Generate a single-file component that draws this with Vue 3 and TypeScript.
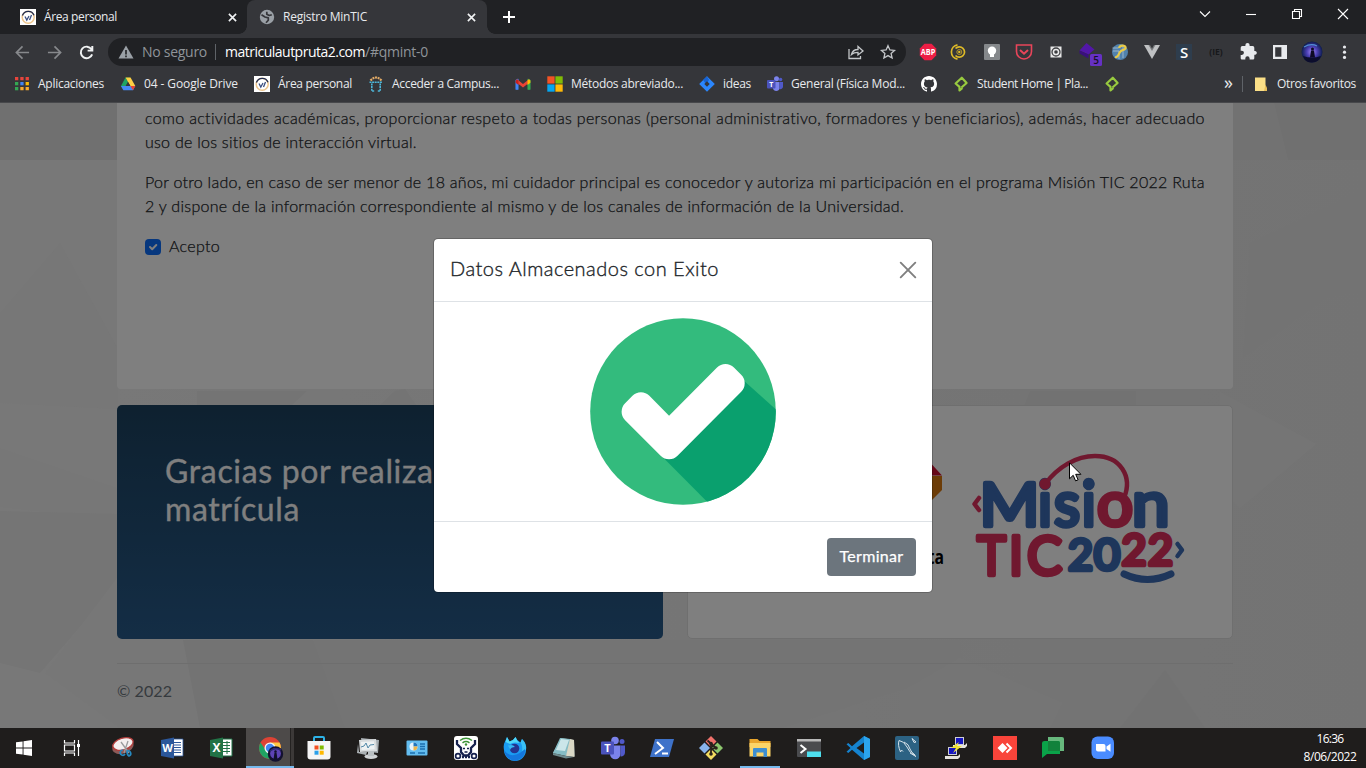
<script setup lang="ts">
interface Bookmark { icon: string; label?: string; w?: number }
interface Glyph { ch: string; x: number; y: number; size: number; w: number; color: string }

// Spreads the letters of a label so that it takes the given width.
const vFit = {
  mounted(el: HTMLElement, binding: { value: number }) {
    const natural = el.getBoundingClientRect().width
    const count = (el.textContent ?? '').trim().length
    el.style.letterSpacing = `${(binding.value - natural) / count}px`
  },
}

const ui = 'font-family="Open Sans, sans-serif"'

const small: Record<string, string> = {
  campus: '<rect width="16" height="16" fill="#fff"/><circle cx="8.200" cy="8.300" r="6" fill="none" stroke="#edc58c" stroke-width="1.500"/><path d="M2.400 6.500A6.200 6.200 0 0 1 14 6.200" fill="none" stroke="#1e2b50" stroke-width="1.300"/><path d="M5 7.500l1.800 3.500L9 7M9.500 11l2-5" fill="none" stroke="#3b4f80" stroke-width="1.300"/>',
  globe: '<circle cx="8" cy="8" r="7.200" fill="#9aa0a6"/><path d="M2.500 5.800 6 8l3.300.8v2.400L7 13.800M7.800 2.800v2.500l2.400 1.200 2.600-.8" fill="none" stroke="#35363a" stroke-width="1.700" stroke-linejoin="round"/>',
  apps: '<g><path d="M1 1h3.300v3.300H1zM6.300 1h3.300v3.300H6.300zM11.600 1h3.300v3.300h-3.300z" fill="#e8453c"/><path d="M1 6h3.300v3.300H1z" fill="#34a853"/><path d="M6.300 6h3.300v3.300H6.300z" fill="#4285f4"/><path d="M11.600 6h3.300v3.300h-3.300z" fill="#fbbc04"/><path d="M1 11h3.300v3.300H1z" fill="#34a853"/><path d="M6.300 11h3.300v3.300H6.300zM11.600 11h3.300v3.300h-3.300z" fill="#f9ab2e"/></g>',
  drive: '<path d="M5.500 1.500h5L8 6z" fill="#188038"/><path d="M5.500 1.500 8 6l-4.600 8.300L1 10z" fill="#1fa463"/><path d="M10.500 1.500 15.300 10h-4.900L5.500 1.500z" fill="#ffcf44"/><path d="M1 10h14.300L13 14.300H3.400z" fill="#4688f4"/><path d="M10.400 10h4.900L13 14.300z" fill="#ea4335"/><path d="M5.700 10 8 6l2.400 4z" fill="#35363a"/>',
  moodle: '<path d="M2.500 4.500q5.500-6 11 0" fill="none" stroke="#e4ac67" stroke-width="2.200" stroke-dasharray="2 .7"/><path d="M1.500 6.200h13M3.800 7.500V15h3M12.200 7.500V15h-3" fill="none" stroke="#4db7d9" stroke-width="1.600" stroke-dasharray="2 .6"/>',
  gmail: '<path d="M.8 13.500V4l2.400-1v10.500z" fill="#4285f4" stroke="#4285f4" stroke-width=".6"/><path d="M12.800 13.500V3l2.400 1v9.500z" fill="#34a853" stroke="#34a853" stroke-width=".6"/><path d="M2 3.200 8 8l6-4.800v3.600L8 11.600 2 6.800z" fill="#ea4335"/><path d="M12.500 4.500 14 3.200l1.400 1.200v2.400l-2.900 2.200z" fill="#fbbc04"/><path d="M.6 4.400 2 3.200l1.500 1.200V9L.6 6.800z" fill="#c5221f"/>',
  ms: '<path d="M.3.300h7.300v7.300H.3z" fill="#f35325"/><path d="M8.400.300h7.300v7.300H8.400z" fill="#81bc06"/><path d="M.3 8.400h7.300v7.300H.3z" fill="#05a6f0"/><path d="M8.400 8.400h7.300v7.300H8.400z" fill="#ffba08"/>',
  jira: '<path d="M8 .2 15.800 8 8 15.800.2 8z" fill="#2b86fc"/><path d="M8 .2 10 4 7 8 4 4z" fill="#1763d3"/><path d="m8 5.300 2.700 2.700L8 10.700 5.300 8z" fill="#35363a"/>',
  teams: `<circle cx="9.500" cy="2.700" r="2.500" fill="#7b83eb"/><circle cx="13.600" cy="3.500" r="1.700" fill="#5059c9"/><path d="M6 6h6.500v6.300a3.300 3.300 0 0 1-6.500 0z" fill="#7b83eb"/><path d="M12.500 6H16v5a2.600 2.600 0 0 1-3.500 2z" fill="#5059c9"/><rect y="4" width="8.500" height="8.500" rx="1" fill="#4b53bc"/><text x="4.200" y="10.800" text-anchor="middle" font-size="7" font-weight="700" fill="#fff" ${ui}>T</text>`,
  github: '<path fill="#fff" d="M8 0C3.580 0 0 3.580 0 8c0 3.540 2.290 6.530 5.470 7.590.4.070.55-.17.55-.38 0-.19-.01-.82-.01-1.490-2.010.37-2.530-.49-2.690-.94-.09-.23-.48-.94-.82-1.130-.28-.15-.68-.52-.01-.53.63-.01 1.080.58 1.230.82.72 1.210 1.870.87 2.330.66.070-.52.28-.87.51-1.070-1.780-.2-3.640-.89-3.640-3.950 0-.87.31-1.590.82-2.150-.08-.2-.36-1.020.08-2.120 0 0 .67-.21 2.200.82.64-.18 1.320-.27 2-.27s1.360.09 2 .27c1.530-1.040 2.200-.82 2.200-.82.44 1.100.16 1.920.08 2.120.51.56.82 1.270.82 2.150 0 3.070-1.870 3.750-3.650 3.950.29.25.54.73.54 1.480 0 1.070-.01 1.930-.01 2.200 0 .21.15.46.55.38A8.010 8.010 0 0 0 16 8c0-4.420-3.580-8-8-8"/>',
  platzi: '<path d="M8.500 11.500 13.600 7 8.800 1.700 2.600 7.500 6.500 10.800V14.500L9.500 12" fill="none" stroke="#98ca3f" stroke-width="2.200" stroke-linejoin="round"/>',
  folder: '<path d="M2 1.500h10.500V15H2z" fill="#fbdf87"/><path d="M12.500 8.500 14 12v3h-3z" fill="#e8bf5a"/>',
}

const ext: string[] = [
  `<path d="M6.500 1.800h7l4.700 4.700v7l-4.700 4.700h-7l-4.700-4.700v-7z" fill="#ed1e45"/><text x="10" y="13" text-anchor="middle" font-size="8" font-weight="700" fill="#fff" textLength="14.500" lengthAdjust="spacingAndGlyphs" ${ui}>ABP</text>`,
  '<path d="M8.500 2.800a7.300 7.300 0 0 0 0 14.400M6.500 6.500a5.200 5.200 0 1 1 0 7" fill="none" stroke="#ddb928" stroke-width="1.700" transform="translate(-1 0)"/><circle cx="9.300" cy="10" r="2.500" fill="none" stroke="#b3972b"/><circle cx="9.300" cy="10" r="1.200" fill="#ddb928"/>',
  '<rect x="2" y="2" width="16" height="16" rx="1" fill="#85888b"/><circle cx="10" cy="8.800" r="4.200" fill="#fff"/><path d="M8 12h4v3H8z" fill="#fff"/>',
  '<path d="M2.500 3h15v6.500a7.500 7.500 0 0 1-15 0z" fill="none" stroke="#e8455a" stroke-width="1.600"/><path d="m6 8 4 3.700L14 8" fill="none" stroke="#e8455a" stroke-width="2"/>',
  '<rect x="4.500" y="4.500" width="11" height="11" fill="#e9e9e9"/><circle cx="10" cy="10" r="4" fill="none" stroke="#3c3d40" stroke-width="1.300"/><circle cx="10" cy="10" r="1.800" fill="#3c3d40"/>',
  `<path d="m8.500 1 8 6.500-6 5-9-4z" fill="#5217a8"/><path d="m1.500 8.500 9 4v4l-9-5z" fill="#39107c"/><rect x="12" y="12" width="12" height="12" rx="1.500" fill="#6631c4"/><text x="18" y="21.700" text-anchor="middle" font-size="10" font-weight="600" fill="#161022" ${ui}>5</text>`,
  '<circle cx="10" cy="10" r="8" fill="#5282ad"/><path d="M3 9h6v8M2.500 6h6M13 3v13" stroke="#9ab6cc" fill="none"/><path d="M5 15c4 1 3-4 6-6s5-1 4.500-3.500S10 3 9 6" fill="none" stroke="#e8ca48" stroke-width="2.200"/>',
  '<path d="M2 3h16l-8 14z" fill="#bfc1c3"/><path d="M6.500 3h7L10 9z" fill="#77797c"/><path d="M8 3h4l-2 3.500z" fill="#35363a"/>',
  `<rect x="2" y="2" width="16" height="16" fill="#2e3d4d"/><text x="10" y="15.500" text-anchor="middle" font-size="15" font-weight="600" fill="#fff" ${ui}>S</text>`,
  `<text x="10" y="13" text-anchor="middle" font-size="8.500" font-weight="700" fill="#17181a" ${ui}>(IE)</text>`,
  '<path d="M17 9.500h-1V6.300a1.600 1.600 0 0 0-1.600-1.600H11.300v-1a2.100 2.100 0 0 0-4.200 0v1H4A1.600 1.600 0 0 0 2.400 6.300v3h1.100a2.100 2.100 0 0 1 0 4.300H2.400v3c0 .9.700 1.600 1.600 1.600h3v-1.100a2.100 2.100 0 0 1 4.300 0v1.100h3.100c.9 0 1.600-.7 1.600-1.600v-3.200h1a2 2 0 0 0 0-3.900z" fill="#e8eaed" transform="translate(.3 -.6)"/>',
  '<path fill-rule="evenodd" d="M3 3h14v14H3zM5.200 5.200v9.600h6.200V5.200z" fill="#e8eaed"/>',
  '<defs><radialGradient id="night"><stop offset="0" stop-color="#a78bf5"/><stop offset=".5" stop-color="#4b3fb5"/><stop offset="1" stop-color="#0d1c4c"/></radialGradient></defs><circle cx="10" cy="10" r="10.500" fill="url(#night)"/><path d="M2 5q7-4 13-1" stroke="#5aa6ea" fill="none" stroke-width="1.200" opacity=".8"/><path d="M1 14q9 3 18 0-2 6-9 6.500T1 14z" fill="#0c0d2c"/><circle cx="10.500" cy="7" r="1.500" fill="#0d0a24"/><path d="M9 8.500h3l1 7H8z" fill="#0d0a24"/>',
  '<g fill="#e8eaed"><circle cx="10.500" cy="5" r="1.600"/><circle cx="10.500" cy="10.200" r="1.600"/><circle cx="10.500" cy="15.400" r="1.600"/></g>',
]

const bookmarks: Bookmark[] = [
  { icon: 'apps', label: 'Aplicaciones', w: 66 },
  { icon: 'drive', label: '04 - Google Drive', w: 94 },
  { icon: 'campus', label: 'Área personal', w: 74 },
  { icon: 'moodle', label: 'Acceder a Campus...', w: 107 },
  { icon: 'gmail' },
  { icon: 'ms', label: 'Métodos abreviado...', w: 112 },
  { icon: 'jira', label: 'ideas', w: 28 },
  { icon: 'teams', label: 'General (Física Mod...', w: 114 },
  { icon: 'github' },
  { icon: 'platzi', label: 'Student Home | Pla...', w: 111 },
  { icon: 'platzi' },
]

const pinned: { name: string; art: string }[] = [
  { name: 'start', art: '<path fill="#fff" d="M4 6.300 10.600 5.400v6.100H4zM11.500 5.200 20 4v7.500h-8.500zM4 12.400h6.600v6.200L4 17.700zM11.500 12.400H20V20l-8.500-1.200z"/>' },
  { name: 'taskview', art: '<path d="M4.500 4v3h10V4M4.500 20v-3h10v3M4.500 9h10v6h-10zM18.500 4v16" fill="none" stroke="#fff" stroke-width="1.200"/><path d="M17 8h3v3h-3z" fill="#fff"/>' },
  { name: 'snip', art: '<ellipse cx="12" cy="11" rx="11" ry="6.500" transform="rotate(-17 12 11)" fill="#8c5a58"/><ellipse cx="12" cy="8" rx="10.500" ry="5.800" transform="rotate(-17 12 8)" fill="#f3eeee" stroke="#b33e3c" stroke-width="1.400"/><path d="m10 6 8 11M17 5l-4 12" stroke="#9a9a9c" stroke-width="1.300"/><path d="M12 14a2.600 2.600 0 1 0 2 4M16 15a2.500 2.500 0 1 1 2 5q-2-1-2-5z" fill="none" stroke="#2689c0" stroke-width="1.700"/>' },
  { name: 'word', art: `<path d="M12 3h11v17H12z" fill="#fff" stroke="#2b579a" stroke-width=".8"/><path d="M14 6.500h7M14 9h7M14 11.500h7M14 14h7M14 16.500h7" stroke="#2b579a"/><path d="M1 4 14 1.500v21L1 20z" fill="#2b579a"/><text x="7.500" y="16" text-anchor="middle" font-size="11" font-weight="700" fill="#fff" ${ui}>W</text>` },
  { name: 'excel', art: `<path d="M12 3h11v17H12z" fill="#fff" stroke="#217346" stroke-width="1"/><path d="M14 6.500h7M14 9.500h7M14 12.500h7M14 15.500h7M18 5v13" stroke="#217346"/><path d="M1 4 14 1.500v21L1 20z" fill="#217346"/><text x="7.500" y="16.300" text-anchor="middle" font-size="12" font-weight="700" fill="#fff" ${ui}>X</text>` },
  { name: 'chrome', art: '<circle cx="12" cy="12" r="11" fill="#dd4335"/><path d="M2.500 6.500A11 11 0 0 0 12 23l4.500-8.500H8z" fill="#1fa463"/><path d="M21.500 6.500H12l4.800 8L12 23A11 11 0 0 0 21.500 6.500z" fill="#fdc843"/><circle cx="12" cy="12" r="5.500" fill="#f4f4f4"/><circle cx="12" cy="12" r="4.200" fill="#4285f4"/><circle cx="17.500" cy="18" r="7.700" fill="#131130"/><circle cx="17.500" cy="17.500" r="5.400" fill="#5c43b5"/><circle cx="17.500" cy="15.500" r="1.200" fill="#10102c"/><path d="M16.500 16.500h2l1 7h-4z" fill="#10102c"/><path d="M12 15q5-4 11-1" stroke="#2d2a73" stroke-width="1.500" fill="none"/>' },
  { name: 'store', art: '<path d="M7 6V2q0-1 1-1h8q1 0 1 1v4" fill="none" stroke="#2db2e6" stroke-width="2"/><path d="M.5 5h23v15.500q0 3-3 3h-17q-3 0-3-3z" fill="#f5f5f5"/><path d="M7.500 9.500h4v4h-4z" fill="#f25022"/><path d="M12.700 9.500h4v4h-4z" fill="#7fba00"/><path d="M7.500 14.700h4v4h-4z" fill="#2aa0ea"/><path d="M12.700 14.700h4v4h-4z" fill="#ffb900"/>' },
  { name: 'monitor', art: '<path d="m5 2 18 2-1 13-15-2z" fill="#a5acb0"/><path d="m3 4 17-1 1 12-17 1z" fill="#d8dcde"/><path d="m5 6 13-.7.7 8-13 .8z" fill="#eef2f3"/><path d="m5 11 3-1 2-3 2 5 2-3 4-.5" fill="none" stroke="#5289a8"/><path d="m2 8-1 9 9 2 1-3H3z" fill="#aab0b3"/><ellipse cx="15" cy="20.500" rx="6.500" ry="2.500" fill="#d0d3d5"/><path d="M12 15h6v5h-6z" fill="#b9bfc2"/>' },
  { name: 'panel', art: '<rect x="1.500" y="4.500" width="21" height="15" rx="1" fill="#63bdf0"/><circle cx="8.500" cy="10.500" r="4" fill="#e6f4fc"/><path d="M8.500 10.500v-4a4 4 0 0 1 4 4z" fill="#2176bd"/><path d="M8.500 10.500h4a4 4 0 0 1-4 4z" fill="#edb64a"/><path d="M15 8h5M15 10.500h5M15 13h5M5 17h5M13 17h7" stroke="#1c6faf" stroke-width="1.300"/>' },
  { name: 'robot', art: '<rect width="24" height="24" rx="3" fill="#fff"/><path d="M6 4.500q6-4.500 12 0M8.500 6.800q3.500-2.500 7 0" fill="none" stroke="#3d9338" stroke-width="1.500"/><circle cx="12" cy="8.500" r="1.200" fill="#3d9338"/><path d="M3 4v4l4 4v4l3 3.500h4l3-3.500v-4l4-4V4" fill="none" stroke="#16214e" stroke-width="2.300"/><path d="M9 12.500h2M13 12.500h2M10.500 16h3" stroke="#16214e" stroke-width="1.500"/><circle cx="4" cy="20" r="2.400" fill="none" stroke="#16214e" stroke-width="1.700"/><circle cx="20" cy="20" r="2.400" fill="none" stroke="#16214e" stroke-width="1.700"/><path d="M8 21h8" stroke="#16214e" stroke-width="2.600" stroke-dasharray="2 1"/>' },
  { name: 'firefox', art: '<path d="M2 5.500 4 1l2.500 4.500L10 4l2.500-3q1.500 4 5 5.500L19 3q5 5 4 11a11 11 0 0 1-22 0Q0 9 2 5.500z" fill="#1a9cf2"/><path d="M2.500 6 4 1l2.500 4.500L10 4l2.500-3q1.500 4 4 6-6-1.500-9.500 1z" fill="#4fd8f8"/><path d="M17.500 6.500 19 3q5 5 4 11l-4 1q1-5-1.500-8.500z" fill="#3ac0f5"/><circle cx="11.500" cy="12.500" r="4.800" fill="#24348f"/><path d="M5 9.500q5-1.500 7 1.500-4 0-5 3z" fill="#35b8f4"/><path d="M1 14q4 6 10 5t11-6q1 9-9.500 12Q3 24 1 14z" fill="#1477dd"/>' },
  { name: 'notepad', art: '<path d="M9 2 22 4l.5 16L1 17z" fill="#9fb8bb"/><path d="m8 2 10 1-4 17L1 17z" fill="#86bdc5"/><path d="m9 3 8 1-4 11L4 14z" fill="#cbe6e9"/><path d="m18 3 4 1 .5 17L14 20z" fill="#dad8c5"/><path d="m1 17 13 3 8 1-8 1.500L1 19z" fill="#6e8a8d"/>' },
  { name: 'teams', art: `<circle cx="14" cy="4.500" r="3.800" fill="#7b83eb"/><circle cx="21" cy="5.500" r="2.500" fill="#5059c9"/><path d="M9 9.500h10.500v8.500a5.200 5.200 0 0 1-10.500 0z" fill="#7b83eb"/><path d="M19.500 9.500H24v7a4 4 0 0 1-4.500 4z" fill="#5059c9"/><rect y="5.500" width="13" height="13" rx="1" fill="#4b53bc"/><text x="6.500" y="16" text-anchor="middle" font-size="11" font-weight="700" fill="#fff" ${ui}>T</text>` },
  { name: 'powershell', art: '<path d="M5 3h19l-5 18H0z" fill="#3e72c9"/><path d="m7 6 6 6-8 6M12 17.500h6" fill="none" stroke="#fff" stroke-width="2"/>' },
  { name: 'git', art: '<path d="M12 0 17.500 5.500 12 11 6.500 5.500z" fill="#f0716b"/><path d="m5.500 6.500 5.500 5.500-5.500 5.500L0 12z" fill="#89b4ec"/><path d="m18.500 6.500 5.500 5.500-5.500 5.500L13 12z" fill="#8cc66d"/><path d="m12 13 5.500 5.500L12 24l-5.500-5.500z" fill="#f4dc60"/><path d="M12 19V8M8.500 4.500 17 12M12 14l4-2.500" stroke="#2a211c" stroke-width="1.800"/><g fill="#2a211c"><circle cx="12" cy="7.500" r="1.800"/><circle cx="17" cy="12" r="1.800"/><circle cx="12" cy="18" r="1.800"/></g>' },
  { name: 'explorer', art: '<path d="M1.500 3h8l2 2h11v6h-21z" fill="#e9a52c"/><path d="M1.500 7h21v13.500h-21z" fill="#fcd568"/><path d="M5 21v-8q0-1 1-1h12q1 0 1 1v8h-3.500v-4.500h-7V21z" fill="#3f8fd0"/>' },
  { name: 'terminal', art: '<rect y="3" width="24" height="18" rx="1" fill="#4a4b4e"/><path d="M0 3h24v2.500H0z" fill="#b9b9b9"/><path d="m3.500 9 5 4-5 4" fill="none" stroke="#fff" stroke-width="2"/><path d="M10 15.500h14V21H10z" fill="#4edfee"/>' },
  { name: 'vscode', art: '<path d="M18 0 24 3v18l-6 3L6 13.700 2.300 17 .5 15.800 4.500 12 .5 8.200 2.300 7 6 10.300zM18 6.500 10.500 12l7.500 5.500z" fill="#1583cf"/><path d="m18 0 6 3v18l-6 3z" fill="#2ba4ee"/>' },
  { name: 'mysql', art: '<rect width="24" height="24" rx="2" fill="#2c6283"/><path d="M8 15.500 6.500 14 5.500 16Q2.500 9 4 4.500q5 .5 8 6.500 1.500 5 9 9.500M15 17l6 3.500M9 6q5 2 6 7 1 3 5 6M17 2.500l4 3.500-2 .5z" fill="none" stroke="#d6e2ea" stroke-width="1"/>' },
  { name: 'putty', art: '<path d="M11 1h9v8h-9z" fill="#cdcdd5"/><path d="M12 2h7v6h-7z" fill="#1616c0"/><path d="M9 9h12l2-2v3l-2 2H9z" fill="#e5e3dd"/><path d="M4 11h9v8H4z" fill="#cdcdd5"/><path d="M5 12h7v6H5z" fill="#1616c0"/><path d="M1 20h13l2-2v3l-2 2H1z" fill="#e5e3dd"/><path d="m15 6-8 6h5l-3 5 9-7h-5z" fill="#f1e334"/>' },
  { name: 'anydesk', art: '<path d="M0 0h24v24H0z" fill="#f9443a"/><path d="m9.500 7 5 5-5 5-5-5z" fill="#fff"/><path d="m13.500 7.500 4.500 4.500-4.500 4.500" fill="none" stroke="#fff" stroke-width="2"/>' },
  { name: 'chat', art: '<path d="M6 1h14q2 0 2 2v12H6z" fill="#67b87d"/><path d="M2.500 5H16q2 0 2 2v11H5l-5 4V7q0-2 2.500-2z" fill="#0aa349"/><path d="M6 5h10q2 0 2 2v8H6z" fill="#12823c"/>' },
  { name: 'zoom', art: '<rect x=".5" y=".5" width="22.500" height="22.500" rx="6" fill="#4a8cff"/><path d="M5 8h7.500q2 0 2 2v5.500H7q-2 0-2-2z" fill="#fff"/><path d="m15.500 10.500 4-2.700v8l-4-2.700z" fill="#fff"/>' },
]

const blue = '#3d6cb6'
const pink = '#e0305f'
const logo: Glyph[] = [
  { ch: 'M', x: 979.5, y: 526, size: 60, w: 60, color: blue },
  { ch: 'i', x: 1038, y: 526, size: 61, w: 14, color: blue },
  { ch: 's', x: 1054, y: 526, size: 61, w: 26, color: blue },
  { ch: 'i', x: 1081.7, y: 526, size: 61, w: 14, color: blue },
  { ch: 'o', x: 1097, y: 526, size: 61, w: 36, color: pink },
  { ch: 'n', x: 1132, y: 526, size: 61, w: 37.5, color: blue },
  { ch: 'T', x: 977, y: 575, size: 55, w: 29, color: pink },
  { ch: 'I', x: 1009, y: 575, size: 55, w: 14, color: pink },
  { ch: 'C', x: 1027, y: 575, size: 55, w: 35, color: pink },
  { ch: '2', x: 1068, y: 570, size: 43, w: 25, color: blue },
  { ch: '0', x: 1094, y: 570, size: 43, w: 26, color: blue },
  { ch: '2', x: 1121.5, y: 565, size: 43, w: 25, color: pink },
  { ch: '2', x: 1148, y: 565, size: 43, w: 25, color: pink },
]
</script>

<template>
  <div class="screen">
    <header class="tabs">
      <div class="tab first">
        <svg class="i16" viewBox="0 0 16 16" v-html="small.campus" />
        <span v-fit="73" class="label">Área personal</span>
        <svg class="close" viewBox="0 0 10 10"><path d="m1 1 8 8M9 1 1 9" /></svg>
      </div>
      <div class="tab active">
        <svg class="i16" viewBox="0 0 16 16" v-html="small.globe" />
        <span v-fit="84" class="label">Registro MinTIC</span>
        <svg class="close" viewBox="0 0 10 10"><path d="m1 1 8 8M9 1 1 9" /></svg>
      </div>
      <svg class="plus" viewBox="0 0 12 12"><path d="M6 0v12M0 6h12" /></svg>
      <div class="controls">
        <svg viewBox="0 0 12 12"><path d="m1 3.500 5 5 5-5" /></svg>
        <svg viewBox="0 0 12 12"><path d="M1 6.500h10" /></svg>
        <svg viewBox="0 0 12 12"><path d="M1.500 3.500h7v7h-7zM3.500 3.500v-2h7v7h-2" /></svg>
        <svg viewBox="0 0 12 12"><path d="m1 1 10 10M11 1 1 11" /></svg>
      </div>
    </header>

    <div class="toolbar">
      <div class="cell"><svg class="nav dim" viewBox="0 0 16 16"><path d="M15 8H2M8 1.500 1.500 8 8 14.500" /></svg></div>
      <div class="cell"><svg class="nav dim" viewBox="0 0 16 16"><path d="M1 8h13M8 1.500 14.500 8 8 14.500" /></svg></div>
      <div class="cell"><svg class="nav" viewBox="0 0 16 16"><path d="M13.300 4.500A6.200 6.200 0 1 0 14 10M14.200 1v5H9.200" /></svg></div>
      <div class="omnibox">
        <svg class="warn" viewBox="0 0 16 16"><path d="M8 1.500 15.500 14.500H.5z" fill="#9aa0a6" /><path d="M8 6v4.500M8 11.500v1.700" stroke="#202124" stroke-width="1.600" /></svg>
        <span v-fit="65" class="insecure">No seguro</span>
        <span class="bar"></span>
        <span v-fit="140" class="host">matriculautpruta2.com</span>
        <span v-fit="63" class="path">/#qmint-0</span>
        <svg class="share" viewBox="0 0 16 16"><path d="M1 5v9.500h11.500V12M3.500 10.500C4.500 6.500 7 5.500 10 5.500V2.500L15 7l-5 4V8.300C7.500 8.300 5 9 3.500 10.500z" /></svg>
        <svg class="star" viewBox="0 0 16 16"><path d="m8 1.700 1.900 4.200 4.600.5-3.400 3 1 4.600L8 11.600 3.900 14l1-4.600-3.400-3 4.600-.5z" /></svg>
      </div>
      <div v-for="(art, n) in ext" :key="n" class="cell">
        <svg class="ext" viewBox="0 0 20 20" v-html="art" />
      </div>
    </div>

    <nav class="bookmarks">
      <div v-for="(b, n) in bookmarks" :key="n" class="bookmark">
        <svg class="i16" viewBox="0 0 16 16" v-html="small[b.icon]" />
        <span v-if="b.label" v-fit="b.w" class="label">{{ b.label }}</span>
      </div>
      <div class="others">
        <span class="more">»</span>
        <span class="bar"></span>
        <svg class="i16" viewBox="0 0 16 16" v-html="small.folder" />
        <span v-fit="79" class="label">Otros favoritos</span>
      </div>
    </nav>

    <main class="viewport">
      <svg class="facets" viewBox="0 0 1366 625">
        <defs>
          <linearGradient id="base"><stop offset="0" stop-color="#f1f1f1" /><stop offset=".5" stop-color="#ebebeb" /><stop offset="1" stop-color="#e7e7e7" /></linearGradient>
        </defs>
        <path d="M0 0h1366v625H0z" fill="url(#base)" />
        <path d="M0 0h1366v57H0z" fill="#e0e0e0" />
        <path d="M1233 0h41l14 57h-55z" fill="#e5e5e5" />
        <path d="m60 140 58 106v60L0 300v-90z" fill="#ececec" opacity=".7" />
        <path d="m0 345 117 40v32L0 404z" fill="#eee" />
        <path d="m0 408 117 3v70L40 570 0 560z" fill="#eaeaea" />
        <path d="m45 570 72-95 66 62 17 88H120z" fill="#efefef" />
        <path d="M183 537h130l50 60-18 28H200z" fill="#e6e6e6" />
        <path d="M197 288h110l-15 14h-95zM395 288l10-2 12 17h-38z" fill="#e8e8e8" />
        <path d="M313 537h647l3 30-180 58H345z" fill="#e9e9e9" />
        <path d="m900 590 60-35 102 45-12 25H900z" fill="#ebebeb" />
        <path d="m1165 567 40 58h-85z" fill="#e5e5e5" />
        <path d="m1220 289 96 52-76 64-20-20z" fill="#ebebeb" />
        <path d="m1250 140 116-55v100l-40 10-83 60z" fill="#e5e5e5" opacity=".4" />
        <path d="M1030 288h106v15h-112z" fill="#e5e5e5" />
      </svg>

      <div class="page">
        <section class="terms">
          <p>
            <span v-fit="1060" class="line">como actividades académicas, proporcionar respeto a todas personas (personal administrativo, formadores y beneficiarios), además, hacer adecuado</span>
            <span v-fit="272" class="line">uso de los sitios de interacción virtual.</span>
          </p>
          <p>
            <span v-fit="1060" class="line">Por otro lado, en caso de ser menor de 18 años, mi cuidador principal es conocedor y autoriza mi participación en el programa Misión TIC 2022 Ruta</span>
            <span v-fit="759" class="line">2 y dispone de la información correspondiente al mismo y de los canales de información de la Universidad.</span>
          </p>
          <label class="accept">
            <svg class="check" viewBox="0 0 16 16"><rect width="16" height="16" rx="4" fill="#0d6efd" /><path d="m5 8 2.200 2.200L11.300 6" fill="none" stroke="#fff" stroke-width="2" stroke-linecap="round" stroke-linejoin="round" /></svg>
            <span v-fit="51" class="line">Acepto</span>
          </label>
        </section>
        <div class="cards">
          <section class="thanks">
            <h2><span v-fit="281" class="line">Gracias por realizar</span><span v-fit="135" class="line">matrícula</span></h2>
          </section>
          <section class="brands">
            <svg class="logos" viewBox="687 405 546 234">
              <path d="M905 476h37v14l-10 10-27 15z" fill="#d9790e" />
              <path d="m905 462 27 2.500 10 11h-37z" fill="#cf1030" />
              <text x="907" y="564" textLength="37" lengthAdjust="spacingAndGlyphs" class="ruta">Ruta</text>
              <text
                v-for="(g, n) in logo" :key="n" class="glyph" :x="g.x" :y="g.y" :font-size="g.size"
                :textLength="g.w" lengthAdjust="spacingAndGlyphs" :fill="g.color" :stroke="g.color"
              >{{ g.ch }}</text>
              <circle cx="1045" cy="484" r="5.700" :fill="pink" />
              <circle cx="1088.700" cy="484" r="5.700" :fill="blue" />
              <g fill="none" stroke-linecap="round" stroke-linejoin="round">
                <path d="M1045 484C1058 467 1076 456 1095 456c25 0 38 20 29 42" :stroke="pink" stroke-width="4.500" />
                <path d="m979 498-4.500 6 4.500 6" :stroke="pink" stroke-width="4.500" />
                <path d="m1177.500 544 4.500 6-4.500 6" :stroke="blue" stroke-width="4.500" />
                <path d="M1124 574q23.500 11 47 0" :stroke="blue" stroke-width="7" />
              </g>
            </svg>
          </section>
        </div>
        <footer class="foot"><span v-fit="55" class="line">© 2022</span></footer>
      </div>

      <div class="backdrop">
        <div class="modal">
          <div class="modal-head">
            <h5 v-fit="269">Datos Almacenados con Exito</h5>
            <svg class="dismiss" viewBox="0 0 16 16"><path d="m.7.700 14.600 14.600M15.300.7.700 15.300" /></svg>
          </div>
          <div class="modal-body">
            <svg class="success" viewBox="0 0 187 187" preserveAspectRatio="none">
              <clipPath id="disc"><circle cx="93.500" cy="93.500" r="93.300" /></clipPath>
              <circle cx="93.500" cy="93.500" r="93.300" fill="#33bb7d" />
              <path d="M155 63 187 91.500V187h-66L73 139z" fill="#0aa06e" clip-path="url(#disc)" />
              <path d="M79.500 97.700 127.700 49.500a12 12 0 0 1 17 0L152 56.800a12 12 0 0 1 0 17l-64 64a12 12 0 0 1-17 0L35.300 102.200a12 12 0 0 1 0-17l7.400-7.400a12 12 0 0 1 17 0z" fill="#fff" />
            </svg>
          </div>
          <div class="modal-foot"><button type="button"><span v-fit="64" class="line">Terminar</span></button></div>
        </div>
      </div>
    </main>

    <footer class="taskbar">
      <div v-for="app in pinned" :key="app.name" class="task" :class="app.name">
        <svg viewBox="0 0 24 24" v-html="app.art" />
      </div>
      <div class="clock"><span v-fit="27">16:36</span><span v-fit="53">8/06/2022</span></div>
    </footer>

    <svg class="cursor" viewBox="0 0 13 20"><path d="M.5.800v16l3.700-3.500 2.400 5.600 2.500-1.100L6.700 12.300h5.200z" fill="#fff" stroke="#000" /></svg>
  </div>
</template>

<style>
body { margin: 0; overflow: hidden; }
</style>

<style scoped>
.screen { position: relative; width: 1366px; height: 768px; display: flex; flex-direction: column; overflow: hidden; background: #35363a; color: #e8eaed; font: 12px/16px "Open Sans", "Noto Sans", sans-serif; }
.screen * { box-sizing: border-box; }
svg { flex: none; display: block; overflow: visible; }
.i16 { width: 16px; height: 16px; }
.label, .insecure, .host, .path, .line, h5, .clock span { flex: none; white-space: nowrap; }

.tabs { display: flex; align-items: center; height: 34px; background: #202124; }
.tab { display: flex; align-items: center; height: 34px; gap: 8px; }
.first { width: 247px; padding: 0 10px 0 20px; }
.active { position: relative; width: 240px; padding: 0 11px 0 12px; background: #35363a; border-radius: 8px 8px 0 0; }
.active::before, .active::after { content: ""; position: absolute; bottom: 0; width: 8px; height: 8px; }
.active::before { left: -8px; background: radial-gradient(circle at 0 0, #202124 7.5px, #35363a 8px); }
.active::after { right: -8px; background: radial-gradient(circle at 100% 0, #202124 7.5px, #35363a 8px); }
.close { width: 9px; height: 9px; margin-left: auto; fill: none; stroke: #f1f3f4; stroke-width: 1.8; }
.plus { width: 12px; height: 12px; margin-left: 16px; stroke: #fff; stroke-width: 2; }
.controls { display: flex; gap: 34px; margin: 0 17px 6px auto; }
.controls svg { width: 12px; height: 12px; fill: none; stroke: #fff; stroke-width: 1.1; }

.toolbar { display: flex; align-items: center; height: 36px; padding-left: 6px; }
.cell { flex: none; width: 32px; display: flex; justify-content: center; }
.nav { width: 15px; height: 15px; fill: none; stroke: #f1f3f4; stroke-width: 2.1; }
.dim { stroke: #87898c; stroke-width: 1.8; }
.ext { width: 20px; height: 20px; }
.omnibox { flex: none; display: flex; align-items: center; width: 798px; height: 28px; margin: 0 6px; padding: 0 10px; border-radius: 14px; background: #202124; font-size: 14px; line-height: 20px; }
.warn { width: 16px; height: 16px; margin-right: 8px; }
.insecure, .path { color: #8f9499; }
.bar { flex: none; width: 1px; height: 16px; background: #5f6368; }
.omnibox .bar { margin: 0 9px 0 8px; }
.host { color: #fff; }
.share { width: 16px; height: 16px; margin-left: auto; }
.star { width: 16px; height: 16px; margin-left: 16px; }
.share, .star { fill: none; stroke: #c4c7ca; stroke-width: 1.3; }

.bookmarks { display: flex; align-items: center; gap: 16px; height: 33px; padding: 0 10px 5px 14px; border-bottom: 1px solid #47484b; }
.bookmark { flex: none; display: flex; gap: 8px; }
.others { display: flex; align-items: center; margin-left: auto; }
.more { font-size: 18px; margin: -3px 9px 0 0; }
.others .i16 { margin: 0 8px 0 10px; }

.viewport { position: relative; height: 625px; overflow: hidden; background: #eee; color: #212529; font: 400 16px/24px Lato, "Open Sans", sans-serif; }
.facets { position: absolute; inset: 0; width: 1366px; height: 625px; }
.page { position: relative; width: 1116px; margin-left: 117px; }
.line { display: inline-block; line-height: 22px; padding-bottom: 2px; }
.terms { height: 286px; padding: 4px 28px 0; background: #fff; border-radius: 0 0 4px 4px; font-weight: 300; -webkit-text-stroke: .25px #212529; }
.terms p { margin: 0 0 16px; display: flex; flex-direction: column; align-items: flex-start; }
.accept { display: flex; align-items: center; gap: 8px; }
.check { width: 16px; height: 16px; }
.cards { display: grid; grid-template-columns: 1fr 1fr; gap: 24px; margin-top: 16px; }
.thanks { height: 234px; padding: 48px; border-radius: 5px; background: linear-gradient(#1c4260, #285b8b); color: #fff; }
h2 { display: flex; flex-direction: column; align-items: flex-start; margin: 0; font-size: 32px; font-weight: 400; -webkit-text-stroke: .3px #fff; }
h2 .line { line-height: 35.4px; padding-bottom: 3px; }
.brands { height: 234px; background: #fff; border: 1px solid #dedede; border-radius: 5px; }
.logos { width: 546px; height: 234px; margin: -1px; }
.glyph { font-family: Lato, sans-serif; font-weight: 400; stroke-width: 4.6; stroke-linejoin: round; }
.ruta { font: 700 19px "Open Sans", sans-serif; fill: #000; }
.foot { margin-top: 24px; padding-top: 15px; border-top: 1px solid #dcdcdc; color: #6c757d; }

.backdrop { position: absolute; inset: 0; display: flex; align-items: center; justify-content: center; background: rgba(0, 0, 0, .5); }
.modal { width: 500px; background: #fff; background-clip: padding-box; border: 1px solid rgba(0, 0, 0, .2); border-radius: 5px; }
.modal-head { display: flex; align-items: center; justify-content: space-between; height: 63px; padding: 16px; border-bottom: 1px solid #dee2e6; }
h5 { margin: 0; font-size: 20px; line-height: 27px; padding-bottom: 4px; font-weight: 300; -webkit-text-stroke: .35px #212529; }
.dismiss { width: 16px; height: 16px; stroke: #7f7f7f; stroke-width: 1.9; stroke-linecap: round; }
.modal-body { display: flex; justify-content: center; padding: 16px; }
.success { width: 186px; height: 187px; }
.modal-foot { display: flex; justify-content: flex-end; padding: 16px; border-top: 1px solid #dee2e6; }
button { width: 89px; height: 38px; padding: 0 0 2px; border: 0; border-radius: 4px; background: #6c757d; color: #fff; font: 400 16px/24px Lato, sans-serif; -webkit-text-stroke: .25px #fff; }

.taskbar { display: flex; height: 40px; background: #1f1d1c; }
.task { flex: none; width: 49px; height: 40px; display: flex; align-items: center; justify-content: center; }
.task svg { width: 24px; height: 24px; }
.start, .taskview { width: 48px; }
.taskview { margin-right: 2.5px; }
.chrome { width: 48px; margin: 0 .5px; background: linear-gradient(90deg, #4d4a49 44px, #242221 44px, #242221 45px, #3c3938 45px); border-bottom: 2px solid #76b9ed; }
.chrome svg { margin-top: 2px; }
.explorer { background: linear-gradient(#76b9ed, #76b9ed) center bottom / 40px 2px no-repeat; }
.clock { display: flex; flex-direction: column; align-items: center; width: 54px; margin: 2px 9px 0 auto; color: #fff; line-height: 18px; }
.cursor { position: absolute; left: 1069px; top: 462px; width: 13px; height: 20px; }
</style>
